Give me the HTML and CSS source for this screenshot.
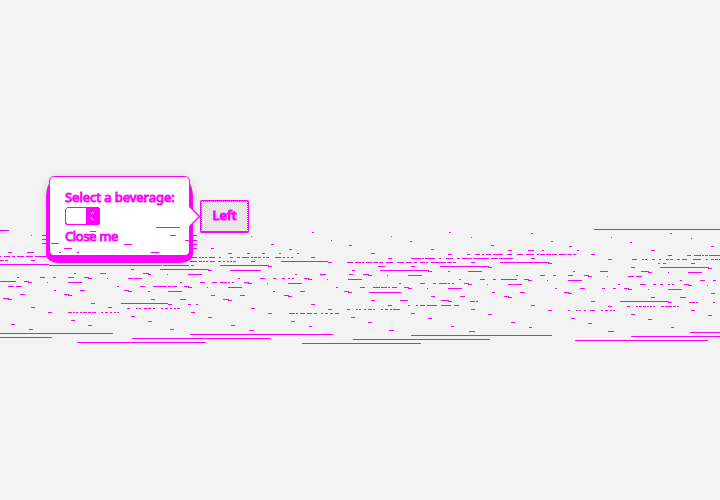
FILE: index.html
```html
<!DOCTYPE html>
<html lang="en">
<head>
<meta charset="utf-8">
<title>Popover</title>
<link rel="stylesheet" href="styles.css">
</head>
<body>
<main class="stage">
  <section class="popover">
    <div class="label">Select a beverage:</div>
    <svg class="select" width="35" height="18" viewBox="0 0 35 18" shape-rendering="crispEdges">
      <rect x=".5" y=".5" width="34" height="17" rx="3" fill="#fff" stroke="#f0f"/>
      <path d="M21 0h13v1h1v16h-1v1H21z" fill="#f0f"/>
      <path d="M27 5h2v1h-2zM26 6h1v1h-1zM26 10h1v2h-1zM27 12h2v1h-2z" fill="#fff"/>
    </svg>
    <div class="close">Close me</div>
    <svg class="arrow" width="11" height="21" viewBox="0 0 11 21"><path d="M0 0L10.5 10.5L0 21" fill="#fff" stroke="#f0f" stroke-width="1.3"/></svg>
  </section>
  <button class="trigger"><span>Left</span></button>
</main>
<svg class="traces" width="720" height="500" shape-rendering="crispEdges"><path id="traces"/></svg>
<script src="traces.js"></script>
</body>
</html>
```
FILE: styles.css
```css
body {
  margin: 0;
  width: 720px;
  height: 500px;
  overflow: hidden;
  background: #f3f3f3;
  color: #f0f;
  font: 13px/18px "Noto Sans", sans-serif;
}

.stage {
  display: flex;
  align-items: flex-start;
  gap: 10px;
  padding: 176px 0 0 49px;
  isolation: isolate;
}

.popover {
  position: relative;
  box-sizing: border-box;
  width: 141px;
  height: 80px;
  padding: 11px 0 0 15px;
  border: 1px solid #f0f;
  border-radius: 5px;
  background: #fff;
}

.popover::before {
  content: "";
  position: absolute;
  z-index: -1;
  inset: 1px -4px -8px;
  border-radius: 10px 10px 12px 12px / 20px 20px 9px 9px;
  background: #f0f;
  box-shadow: 0 0 10px #0002;
}

.label,
.close {
  white-space: nowrap;
  -webkit-text-stroke: .9px #f0f;
}

.label {
  letter-spacing: -.04px;
}

.select {
  display: block;
  margin-top: 1px;
}

.close {
  margin-top: 2px;
  letter-spacing: -.35px;
}

.arrow {
  position: absolute;
  left: 139px;
  top: 29px;
}

.trigger {
  box-sizing: border-box;
  width: 49px;
  height: 33px;
  margin-top: 24px;
  padding: 0 0 2px;
  border: 1px solid #f0f;
  border-bottom-width: 2px;
  border-radius: 2px;
  outline: 1px dotted #f0f;
  outline-offset: -2px;
  background: #e6e6e6;
  color: #f0f;
  font: 13.33px/18px "Noto Sans", sans-serif;
  -webkit-text-stroke: 1.1px #f0f;
}

.traces {
  position: absolute;
  left: 0;
  top: 0;
  pointer-events: none;
}

.traces path {
  stroke: #f0f;
  stroke-width: 1;
  fill: none;
}
```
FILE: traces.js
```js
// Each panel lists its rows as "row:start-end,start-end".
const panels = [
`11:90-96 14:88-93 7:156-180 10:0-9 15:31-32,42-46,170-176 19:42-46 23:42-46,51-59 24:124-132 28:64-72
32:8-12,27-34,59-61,77-79,151-159 36:0-1,4-10,12-15,17-24,26-33,35-49 40:0-4,5-8,31-35 44:0-49 45:49-162,163-180
49:131-134,160-180 53:74-76,100-106,143-149 54:148-151,167-168 57:17-19,40-45,53-56,68-74,84-89
58:88-92,107-108,128-133,134-142 61:0-16,24-29 62:28-32,47-48,68-82 66:8-14,16-22,117-119,140-145,153-167,168-171,172-177
70:54-56,80-85,124-129 71:128-132,148-150,168-180 74:20-25,64-69 75:68-72 78:3-9 79:8-12,151-155
83:91-95,121-168 84:168-172 87:31-35,108-112 88:127-130,136-138,139-141,144-147,148-151,153-155,161-163,165-168,170-172,174-176,177-180
92:48-52,68-72,73-75,76-78,80-82,83-87,88-91,92-96,101-103,105-108,110-112,114-116,117-119
96:131-135 100:71-75 101:148-152 104:11-15 105:88-92 109:29-33,170-174 113:0-113 117:0-52 118:132-180 122:77-180`,
`12:132-134 16:71-72 20:151-152 24:91-94 25:169-172 28:31-34 29:109-112 15:10-17 20:5-17 24:10-17 28:10-17
33:48-52,67-70,82-85,99-101,117-119 37:10-17,19-21,22-24,25-27,29-35,39-41,50-53,57-60,62-69,71-73,74-77,78-81,83-85,86-89,95-101,103-105,107-109,111-113,131-135
41:10-17,19-22,23-25,26-28,30-35,38-41,43-45,47-49,50-52,53-56,71-75,101-148 42:148-152,167-173,175-180
45:0-9,11-14,40-89 46:88-92 49:0-29 50:28-32,50-81,172-175 54:8-22,115-117,140-146,169-173
58:58-60,80-85,93-96,102-105,108-110,112-114,124-129 59:128-132,147-148,168-180
62:0-2,20-25,32-37,40-47,48-50,52-54,64-69 63:68-72,87-88,108-122 66:4-9 67:8-12,27-28,48-62,156-158
71:0-2,93-95,120-125,164-169 72:168-172 75:31-35,60-65,104-109 76:108-112 79:0-6,43-49 80:48-52
84:8-11,16-18,131-135 88:71-75 89:148-152,167-170,176-178,179-180 92:11-15
93:88-92,109-115,116-118,120-125,127-132,134-137,141-143,145-148,150-153,155-159 97:28-32,171-175 101:111-115
105:51-55 106:129-132 110:69-74 114:10-153 118:0-91 119:173-180 122:0-26 123:122-180`,
`12:89-91 13:171-173 16:31-32 17:111-112 21:50-52 25:131-134 29:71-74 30:148-152,168-174 33:11-15
34:88-92,107-110,115-120,122-124,126-131,133-143,147-152,157-163,166-174,177-179
38:28-32,51-61,62-64,65-75,79-81,86-93,97-100,102-112,113-129,131-138,139-153,171-175
42:0-1,2-4,6-12,13-18,19-23,26-33,37-44,46-52,54-57,60-65,66-68,71-86,87-92,93-96,111-115,140-180
46:18-25,51-55,80-129 47:128-132 50:20-69 51:68-72,88-90,108-122 54:3-9 55:8-12,27-28,48-62,156-158
59:0-2,99-101,120-125,133-136,141-157,164-169 60:168-172 63:39-41,60-65,73-76,79-87,88-90,92-94,104-109
64:108-112,127-128,148-153,154-162 67:0-5,13-20,21-27,28-30,32-37,44-49 68:48-52,67-68,88-102
72:9-41,132-135,160-165 76:71-75,100-105,144-149 77:148-152 80:11-15,40-48,81-89 81:88-92,110-115,116-118
85:28-32,48-50,56-58,60-65,67-77,81-91,94-99,171-175 89:0-1,4-6,8-12,13-15,21-23,25-28,30-32,33-40,111-115
93:51-55 94:128-132 98:68-72 102:8-12,151-155 106:91-94 107:169-172 110:29-34 111:109-115 115:51-180 119:0-130 123:0-61`,
`9:54-180 13:130-132 17:71-72 18:151-152 21:11-13 22:90-92 26:29-32,171-174 30:2-4,37-39,111-115
34:0-5,6-11,12-17,19-26,27-32,33-36,51-55 35:128-132,147-151,154-161,162-164,165-168,169-180
39:68-72,92-97,102-104,105-107,112-115,119-121,126-129,130-133,137-140,142-147,153-161,166-168,171-174,175-178,179-180
42:0-9 43:8-12,118-120,123-126,151-155 47:91-95,120-169 48:168-172 51:33-35,60-68,101-109 52:108-112,128-129,148-162
55:0-5,13-16,28-33,44-49 56:48-52,67-68,88-94,96-102 60:7-8,28-42,140-142,160-165,173-176
64:78-80,100-106,113-116,120-123,128-130,132-134,144-149 65:148-152,167-168 68:15-17,40-45,62-65,73-76,84-89
69:88-92,108-109,128-142 72:24-29 73:28-32,171-175 77:111-115,140-146 81:51-55,80-129 82:128-132,149-155,156-158,173-175
86:68-72,87-90,96-98,99-102,103-106,107-109,110-112,113-115,121-124,125-132,133-136,137-139
90:8-12,28-30,36-38,39-41,44-46,50-55,61-63,65-68,70-72,73-75,151-155 94:91-95 95:168-172 98:31-35 99:108-112
103:48-52 107:131-134 111:68-74 112:150-180 115:0-12 116:91-180 120:35-168`
];
let d = "";
panels.forEach((panel, i) => panel.split(/\s+/).forEach(entry => {
  const [row, spans] = entry.split(":");
  spans.split(",").forEach(span => {
    const [a, b] = span.split("-").map(Number);
    d += `M${a + i * 180} ${+row + 220.5}h${b - a}`;
  });
}));
document.getElementById("traces").setAttribute("d", d);
```
